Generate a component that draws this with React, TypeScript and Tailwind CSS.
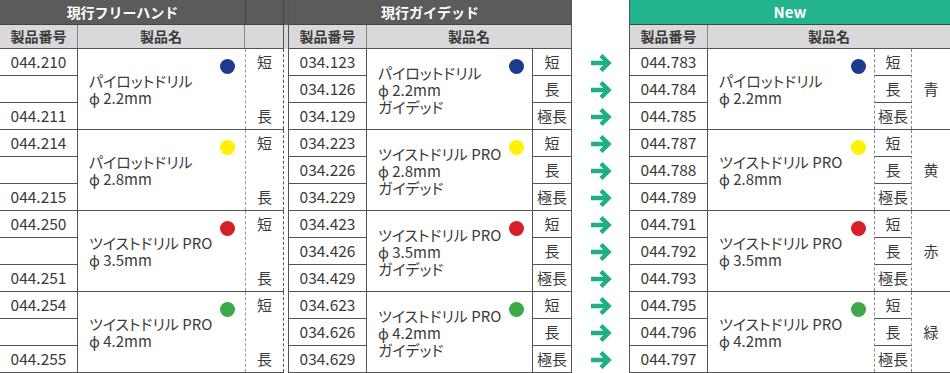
const FONT = "font-['Noto_Sans_CJK_JP','Noto_Sans',sans-serif]";

type Group = {
  nums: string[];
  sizes: string[];
  name: string[];
  dot: string;
  color?: string;
};

const leftGroups: Group[] = [
  { nums: ["044.210", "", "044.211"], sizes: ["短", "", "長"], name: ["パイロットドリル", "ϕ 2.2mm"], dot: "#1e3a8f" },
  { nums: ["044.214", "", "044.215"], sizes: ["短", "", "長"], name: ["パイロットドリル", "ϕ 2.8mm"], dot: "#fff200" },
  { nums: ["044.250", "", "044.251"], sizes: ["短", "", "長"], name: ["ツイストドリル PRO", "ϕ 3.5mm"], dot: "#d71f2a" },
  { nums: ["044.254", "", "044.255"], sizes: ["短", "", "長"], name: ["ツイストドリル PRO", "ϕ 4.2mm"], dot: "#3aaa48" },
];

const midGroups: Group[] = [
  { nums: ["034.123", "034.126", "034.129"], sizes: ["短", "長", "極長"], name: ["パイロットドリル", "ϕ 2.2mm", "ガイデッド"], dot: "#1e3a8f" },
  { nums: ["034.223", "034.226", "034.229"], sizes: ["短", "長", "極長"], name: ["ツイストドリル PRO", "ϕ 2.8mm", "ガイデッド"], dot: "#fff200" },
  { nums: ["034.423", "034.426", "034.429"], sizes: ["短", "長", "極長"], name: ["ツイストドリル PRO", "ϕ 3.5mm", "ガイデッド"], dot: "#d71f2a" },
  { nums: ["034.623", "034.626", "034.629"], sizes: ["短", "長", "極長"], name: ["ツイストドリル PRO", "ϕ 4.2mm", "ガイデッド"], dot: "#3aaa48" },
];

const newGroups: Group[] = [
  { nums: ["044.783", "044.784", "044.785"], sizes: ["短", "長", "極長"], name: ["パイロットドリル", "ϕ 2.2mm"], dot: "#1e3a8f", color: "青" },
  { nums: ["044.787", "044.788", "044.789"], sizes: ["短", "長", "極長"], name: ["ツイストドリル PRO", "ϕ 2.8mm"], dot: "#fff200", color: "黄" },
  { nums: ["044.791", "044.792", "044.793"], sizes: ["短", "長", "極長"], name: ["ツイストドリル PRO", "ϕ 3.5mm"], dot: "#d71f2a", color: "赤" },
  { nums: ["044.795", "044.796", "044.797"], sizes: ["短", "長", "極長"], name: ["ツイストドリル PRO", "ϕ 4.2mm"], dot: "#3aaa48", color: "緑" },
];

function NumCol({ nums, width }: { nums: string[]; width: string }) {
  return (
    <div className={`${width} flex flex-col border-r border-[#555]`}>
      {nums.map((n, i) => (
        <div
          key={i}
          className={`flex items-center justify-center text-[15.5px] ${
            i < 2 ? "h-[27px] border-b border-[#555]" : "flex-1"
          }`}
        >
          {n}
        </div>
      ))}
    </div>
  );
}

function NameCell({ g, width, dotRight }: { g: Group; width: string; dotRight: string }) {
  return (
    <div className={`${width} relative flex items-center pl-[11px]`}>
      <p className="text-[15px] leading-[17px] [font-feature-settings:'palt']">
        {g.name.map((l, i) => (
          <span key={l}>
            {i > 0 && <br />}
            {l}
          </span>
        ))}
      </p>
      <span
        className={`absolute top-[10px] ${dotRight} w-[15px] h-[15px] rounded-full`}
        style={{ background: g.dot }}
      />
    </div>
  );
}

function Arrow() {
  return (
    <svg width="24" height="20" viewBox="0 0 24 20" fill="none">
      <path d="M2 10H20" stroke="#1fae86" strokeWidth="4.5" />
      <path d="M12 2.5L19.5 10L12 17.5" stroke="#1fae86" strokeWidth="4.5" />
    </svg>
  );
}

function LeftTable() {
  return (
    <div className="w-[284px] flex flex-col">
      <div className="flex h-[25px] bg-[#5b5b5b] text-white text-[14px] font-bold border-b border-[#444]">
        <div className="w-[245px] flex items-center justify-center">現行フリーハンド</div>
        <div className="flex-1 border-x border-[#444]" />
      </div>
      <div className="flex h-[24px] bg-[#d9d9d9] text-[14px] font-bold text-[#3a3a3a] border-b border-[#555]">
        <div className="w-[78px] flex items-center justify-center border-r border-[#888]">製品番号</div>
        <div className="w-[167px] flex items-center justify-center border-r border-[#888]">製品名</div>
        <div className="flex-1 border-r border-[#555]" />
      </div>
      {leftGroups.map((g, i) => (
        <div key={i} className="flex h-[81px] border-b border-[#555]">
          <NumCol nums={g.nums} width="w-[78px]" />
          <NameCell g={g} width="w-[167px]" dotRight="right-[10px]" />
          <div className="flex-1 flex flex-col border-l border-dashed border-l-[#999] border-r border-r-[#555]">
            {g.sizes.map((s, j) => (
              <div key={j} className={`flex items-center justify-center text-[15px] ${j < 2 ? "h-[27px]" : "flex-1"}`}>
                {s}
              </div>
            ))}
          </div>
        </div>
      ))}
    </div>
  );
}

function MidTable() {
  return (
    <div className="w-[284px] flex flex-col border-x border-[#555]">
      <div className="flex h-[25px] bg-[#5b5b5b] text-white text-[14px] font-bold border-b border-[#444] items-center justify-center">
        現行ガイデッド
      </div>
      <div className="flex h-[24px] bg-[#d9d9d9] text-[14px] font-bold text-[#3a3a3a] border-b border-[#555]">
        <div className="w-[78px] flex items-center justify-center border-r border-[#888]">製品番号</div>
        <div className="flex-1 flex items-center justify-center">製品名</div>
      </div>
      {midGroups.map((g, i) => (
        <div key={i} className="flex h-[81px] border-b border-[#555]">
          <NumCol nums={g.nums} width="w-[78px]" />
          <NameCell g={g} width="w-[165px]" dotRight="right-[8px]" />
          <div className="flex-1 flex flex-col border-l border-[#555]">
            {g.sizes.map((s, j) => (
              <div
                key={j}
                className={`flex items-center justify-center text-[15px] ${
                  j < 2 ? "h-[27px] border-b border-[#555]" : "flex-1"
                }`}
              >
                {s}
              </div>
            ))}
          </div>
        </div>
      ))}
    </div>
  );
}

function NewTable() {
  return (
    <div className="w-[321px] flex flex-col border-l border-[#555]">
      <div className="flex h-[25px] bg-[#21b48d] text-white text-[15px] font-bold border-b border-[#444] items-center justify-center">
        New
      </div>
      <div className="flex h-[24px] bg-[#d9d9d9] text-[14px] font-bold text-[#3a3a3a] border-b border-[#555]">
        <div className="w-[78px] flex items-center justify-center border-r border-[#888]">製品番号</div>
        <div className="flex-1 flex items-center justify-center">製品名</div>
      </div>
      {newGroups.map((g, i) => (
        <div key={i} className="flex h-[81px] border-b border-[#555]">
          <NumCol nums={g.nums} width="w-[78px]" />
          <NameCell g={g} width="w-[166px]" dotRight="right-[8px]" />
          <div className="w-[38px] flex flex-col border-x border-dashed border-[#888]">
            {g.sizes.map((s, j) => (
              <div
                key={j}
                className={`flex items-center justify-center text-[15px] ${
                  j < 2 ? "h-[27px] border-b border-solid border-[#555]" : "flex-1"
                }`}
              >
                {s}
              </div>
            ))}
          </div>
          <div className="flex-1 flex items-center justify-center text-[15px]">{g.color}</div>
        </div>
      ))}
    </div>
  );
}

export default function App() {
  return (
    <div className={`${FONT} w-[950px] h-[373px] bg-white text-[#3a3a3a] flex overflow-hidden`}>
      <LeftTable />
      <div className="w-[4px] flex flex-col">
        <div className="h-[25px] bg-[#5b5b5b]" />
        <div className="h-[24px] bg-[#d9d9d9]" />
      </div>
      <MidTable />
      <div className="w-[57px] flex flex-col pt-[49px]">
        {Array.from({ length: 12 }).map((_, i) => (
          <div key={i} className="h-[27px] flex items-center justify-center">
            <Arrow />
          </div>
        ))}
      </div>
      <NewTable />
    </div>
  );
}
